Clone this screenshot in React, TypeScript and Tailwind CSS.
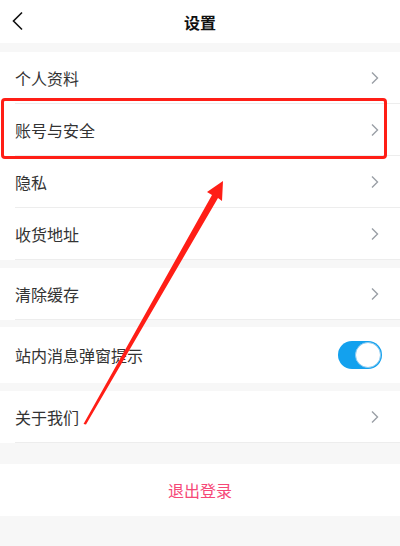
const font = { fontFamily: '"Noto Sans CJK SC", "Noto Sans", sans-serif' }

function Chevron() {
  return (
    <svg width="10" height="14" viewBox="0 0 10 14" fill="none">
      <path d="M2 1.5 7.5 7 2 12.5" stroke="#9a9fa6" strokeWidth="1.4" />
    </svg>
  )
}

function Row({ label, children }: { label: string; children?: React.ReactNode }) {
  return (
    <div className="bg-white pl-[15px]">
      <div className="flex h-[52px] items-center justify-between border-b border-[#ededed] pr-[20px]">
        <span className="text-[16px] text-[#333]">{label}</span>
        {children ?? <Chevron />}
      </div>
    </div>
  )
}

export default function App() {
  return (
    <div className="relative h-[546px] w-[400px] overflow-hidden bg-[#f7f7f7]" style={font}>
      <div className="relative flex h-[43px] items-center justify-center bg-white">
        <svg className="absolute left-[11px] top-[11px]" width="14" height="20" viewBox="0 0 14 20" fill="none">
          <path d="M11 1.5 2.5 10 11 18.5" stroke="#111" strokeWidth="1.6" />
        </svg>
        <span className="text-[16px] font-bold text-[#111]">设置</span>
      </div>

      <div className="mt-[9px]">
        <Row label="个人资料" />
        <Row label="账号与安全" />
        <Row label="隐私" />
        <Row label="收货地址" />
      </div>

      <div className="mt-[8px]">
        <Row label="清除缓存" />
      </div>

      <div className="mt-[7px] flex h-[56px] items-center justify-between bg-white pl-[15px] pr-[18px]">
        <span className="text-[16px] text-[#333]">站内消息弹窗提示</span>
        <div className="flex h-[28px] w-[44px] items-center justify-end rounded-full bg-[#13a1ee] p-[1px]">
          <div className="h-[26px] w-[26px] rounded-full border border-[#8ccaf0] bg-white" />
        </div>
      </div>

      <div className="mt-[8px]">
        <Row label="关于我们" />
      </div>

      <div className="mt-[21px] flex h-[52px] items-center justify-center bg-white">
        <span className="text-[16px] text-[#f64877]">退出登录</span>
      </div>

      <div className="absolute left-[1px] top-[98px] h-[61px] w-[386px] rounded-[4px] border-[3px] border-[#ff1e16]" />
      <svg className="absolute left-0 top-0" width="400" height="546" viewBox="0 0 400 546">
        <polygon
          points="83.5,424 212,195 207,192 223,181 222,201 218,198 86,424.5"
          fill="#ff1e16"
        />
      </svg>
    </div>
  )
}
